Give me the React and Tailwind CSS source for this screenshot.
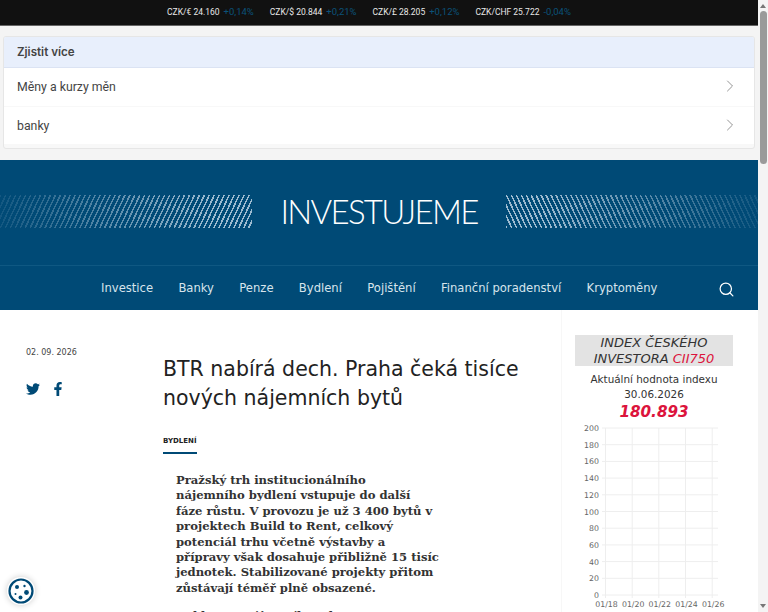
import { ChevronRight, Search } from "lucide-react";
import { FaTwitter, FaFacebookF } from "react-icons/fa";

const rates = [
  { pair: "CZK/€ 24.160", change: "+0,14%" },
  { pair: "CZK/$ 20.844", change: "+0,21%" },
  { pair: "CZK/£ 28.205", change: "+0,12%" },
  { pair: "CZK/CHF 25.722", change: "-0,04%" },
];

const navItems = [
  "Investice",
  "Banky",
  "Penze",
  "Bydlení",
  "Pojištění",
  "Finanční poradenství",
  "Kryptoměny",
];

const yLabels = [200, 180, 160, 140, 120, 100, 80, 60, 40, 20, 0];
const xLabels = ["01/18", "01/20", "01/22", "01/24", "01/26"];

const perex = [
  "Pražský trh institucionálního",
  "nájemního bydlení vstupuje do další",
  "fáze růstu. V provozu je už 3 400 bytů v",
  "projektech Build to Rent, celkový",
  "potenciál trhu včetně výstavby a",
  "přípravy však dosahuje přibližně 15 tisíc",
  "jednotek. Stabilizované projekty přitom",
  "zůstávají téměř plně obsazené.",
];

function IndexChart() {
  const top = 4;
  const step = 16.7;
  const xs = [30.5, 57.2, 83.8, 110.5, 137.2];

  return (
    <svg width="158" height="188" viewBox="0 0 158 188" className="block">
      {yLabels.map((label, i) => (
        <g key={label}>
          <line x1="27" x2="143" y1={top + i * step} y2={top + i * step} stroke="#eeeeee" />
          <text
            x="24"
            y={top + i * step + 3}
            textAnchor="end"
            fontSize="7.8"
            fill="#666666"
            fontFamily="DejaVu Sans"
          >
            {label}
          </text>
        </g>
      ))}
      {xLabels.map((label, i) => (
        <g key={label}>
          <line x1={xs[i]} x2={xs[i]} y1={top} y2={top + 170} stroke="#eeeeee" />
          <text
            x={xs[i] + 1}
            y={top + 179}
            textAnchor="middle"
            fontSize="7.8"
            fill="#666666"
            fontFamily="DejaVu Sans"
          >
            {label}
          </text>
        </g>
      ))}
    </svg>
  );
}

function Hatch({ side }) {
  const fade =
    side === "left"
      ? "[mask-image:linear-gradient(to_right,rgba(0,0,0,0.12),black_85%)]"
      : "[mask-image:linear-gradient(to_left,rgba(0,0,0,0.12),black_85%)]";
  const lines =
    side === "left"
      ? "bg-[repeating-linear-gradient(115deg,#9dbbd0_0,#9dbbd0_1.5px,transparent_1.5px,transparent_4.5px)]"
      : "bg-[repeating-linear-gradient(65deg,#9dbbd0_0,#9dbbd0_1.5px,transparent_1.5px,transparent_4.5px)]";

  return <div className={`h-[33px] flex-1 ${lines} ${fade}`} />;
}

export default function App() {
  return (
    <div className="flex h-[612px] w-[768px] overflow-hidden bg-white font-['Open_Sans',sans-serif]">
      <div className="relative h-full w-[758px] shrink-0 overflow-hidden">
        <div className="flex h-[26px] items-center justify-center gap-[16px] border-b border-[#666666] bg-[#111111] pb-[1px] pr-[20px] font-['Roboto',sans-serif] text-[8.5px]">
          {rates.map((rate) => (
            <span key={rate.pair} className="flex items-baseline gap-[4px] whitespace-nowrap">
              <span className="text-[#e8e8e8]">{rate.pair}</span>
              <span className="text-[9.5px] text-[#0b5279]">{rate.change}</span>
            </span>
          ))}
        </div>

        <div className="bg-[#f4f4f4] px-[3px] pb-[11px] pt-[10px]">
          <div className="overflow-hidden rounded-[3px] border border-[#e6e6e6] bg-[#f8f8f8] pb-[4px]">
            <div className="flex h-[31px] items-center border-b border-[#dbe3f3] bg-[#e8effc] px-[13px] pt-[1px] font-['Inter',sans-serif] text-[11.6px] font-semibold text-[#444444]">
              Zjistit více
            </div>
            <div className="mb-[1px] flex h-[38px] items-center justify-between bg-white pl-[13px] pr-[14px] font-['Roboto',sans-serif] text-[12.3px] text-[#444444]">
              Měny a kurzy měn
              <ChevronRight size={20} strokeWidth={1} color="#808080" className="-mt-[2px]" />
            </div>
            <div className="flex h-[37px] items-center justify-between bg-white pl-[13px] pr-[14px] pt-[1px] font-['Roboto',sans-serif] text-[12.3px] text-[#444444]">
              banky
              <ChevronRight size={20} strokeWidth={1} color="#808080" className="-mt-[2px]" />
            </div>
          </div>
        </div>

        <header className="h-[150px] bg-[#004a76]">
          <div className="flex h-[106px] items-center gap-[28px] border-b border-[#0f5882] pb-[3px]">
            <Hatch side="left" />
            <div className="font-['Lato',sans-serif] text-[33px] font-light leading-none tracking-[-1.7px] text-white">
              INVESTUJEME
            </div>
            <Hatch side="right" />
          </div>
          <nav className="flex h-[44px] items-center pl-[101px] pr-[23px] pt-[2px] font-['DejaVu_Sans',sans-serif] text-[11.6px] text-[#d7e4ec]">
            <div className="flex flex-1 gap-[25.3px]">
              {navItems.map((item) => (
                <span key={item} className="whitespace-nowrap">
                  {item}
                </span>
              ))}
            </div>
            <Search size={17} strokeWidth={1.75} color="#ffffff" />
          </nav>
        </header>

        <main className="flex">
          <div className="w-[163px] shrink-0 pl-[26px] pt-[38px]">
            <div className="font-['DejaVu_Sans',sans-serif] text-[8px] leading-[10px] text-[#444444]">
              02. 09. 2026
            </div>
            <div className="mt-[24px] flex items-center gap-[11px] text-[#004a76]">
              <FaTwitter size={14} />
              <FaFacebookF size={14} />
            </div>
          </div>

          <article className="w-[399px] shrink-0 border-r border-[#f7f7f7] pt-[45px]">
            <h1 className="w-[370px] font-['DejaVu_Sans',sans-serif] text-[20.5px] font-normal leading-[29px] text-[#222222]">
              BTR nabírá dech. Praha čeká tisíce nových nájemních bytů
            </h1>
            <div className="mt-[24px] w-[34px] border-b-[2px] border-[#004a76] pb-[6px] font-['DejaVu_Sans',sans-serif] text-[7px] font-bold leading-[9px] text-[#222222]">
              BYDLENÍ
            </div>
            <div className="ml-[13px] mt-[19px] w-[280px] whitespace-nowrap font-['DejaVu_Serif',serif] text-[11.6px] font-bold leading-[15.4px] text-[#333333]">
              <p>
                {perex.map((line) => (
                  <span key={line} className="block">
                    {line}
                  </span>
                ))}
              </p>
              <p className="mt-[13px]">Cold start nájemního trhu</p>
            </div>
          </article>

          <aside className="ml-[13px] w-[158px] shrink-0 pt-[25px] text-center font-['DejaVu_Sans',sans-serif]">
            <div className="bg-[#e3e3e3] text-[13px] italic leading-[15.5px] text-[#333333]">
              INDEX ČESKÉHO
              <br />
              INVESTORA <span className="text-[#dc143c]">CII750</span>
            </div>
            <div className="mt-[6px] text-[10.4px] leading-[15px] text-[#333333]">
              Aktuální hodnota indexu
              <br />
              30.06.2026
            </div>
            <div className="mt-[2px] text-[15.2px] font-bold italic leading-[17px] text-[#dc143c]">
              180.893
            </div>
            <div className="mt-[3px]">
              <IndexChart />
            </div>
          </aside>
        </main>

        <div className="absolute bottom-[7px] left-[7px] flex h-[28px] w-[28px] items-center justify-center rounded-full bg-white shadow-[0_0_6px_rgba(0,0,0,0.2)]">
          <svg width="26" height="26" viewBox="0 0 26 26">
            <circle cx="13" cy="13" r="11.5" fill="#ffffff" stroke="#004a76" strokeWidth="2.2" />
            <circle cx="9" cy="9" r="2" fill="#004a76" />
            <circle cx="16.5" cy="8" r="1.2" fill="#004a76" />
            <circle cx="18.5" cy="14.5" r="2.4" fill="#004a76" />
            <circle cx="12.5" cy="19.5" r="2" fill="#004a76" />
            <circle cx="7.5" cy="16" r="1" fill="#004a76" />
          </svg>
        </div>
      </div>

      <div className="flex h-full w-[10px] flex-col items-center bg-[#f4f4f4]">
        <div className="mt-[4px] h-0 w-0 border-x-[3px] border-b-[4px] border-x-transparent border-b-[#777777]" />
        <div className="mt-[3px] h-[153px] w-[7px] rounded-[4px] bg-[#9a9a9a]" />
        <div className="mb-[4px] mt-auto h-0 w-0 border-x-[3px] border-t-[4px] border-x-transparent border-t-[#777777]" />
      </div>
    </div>
  );
}
